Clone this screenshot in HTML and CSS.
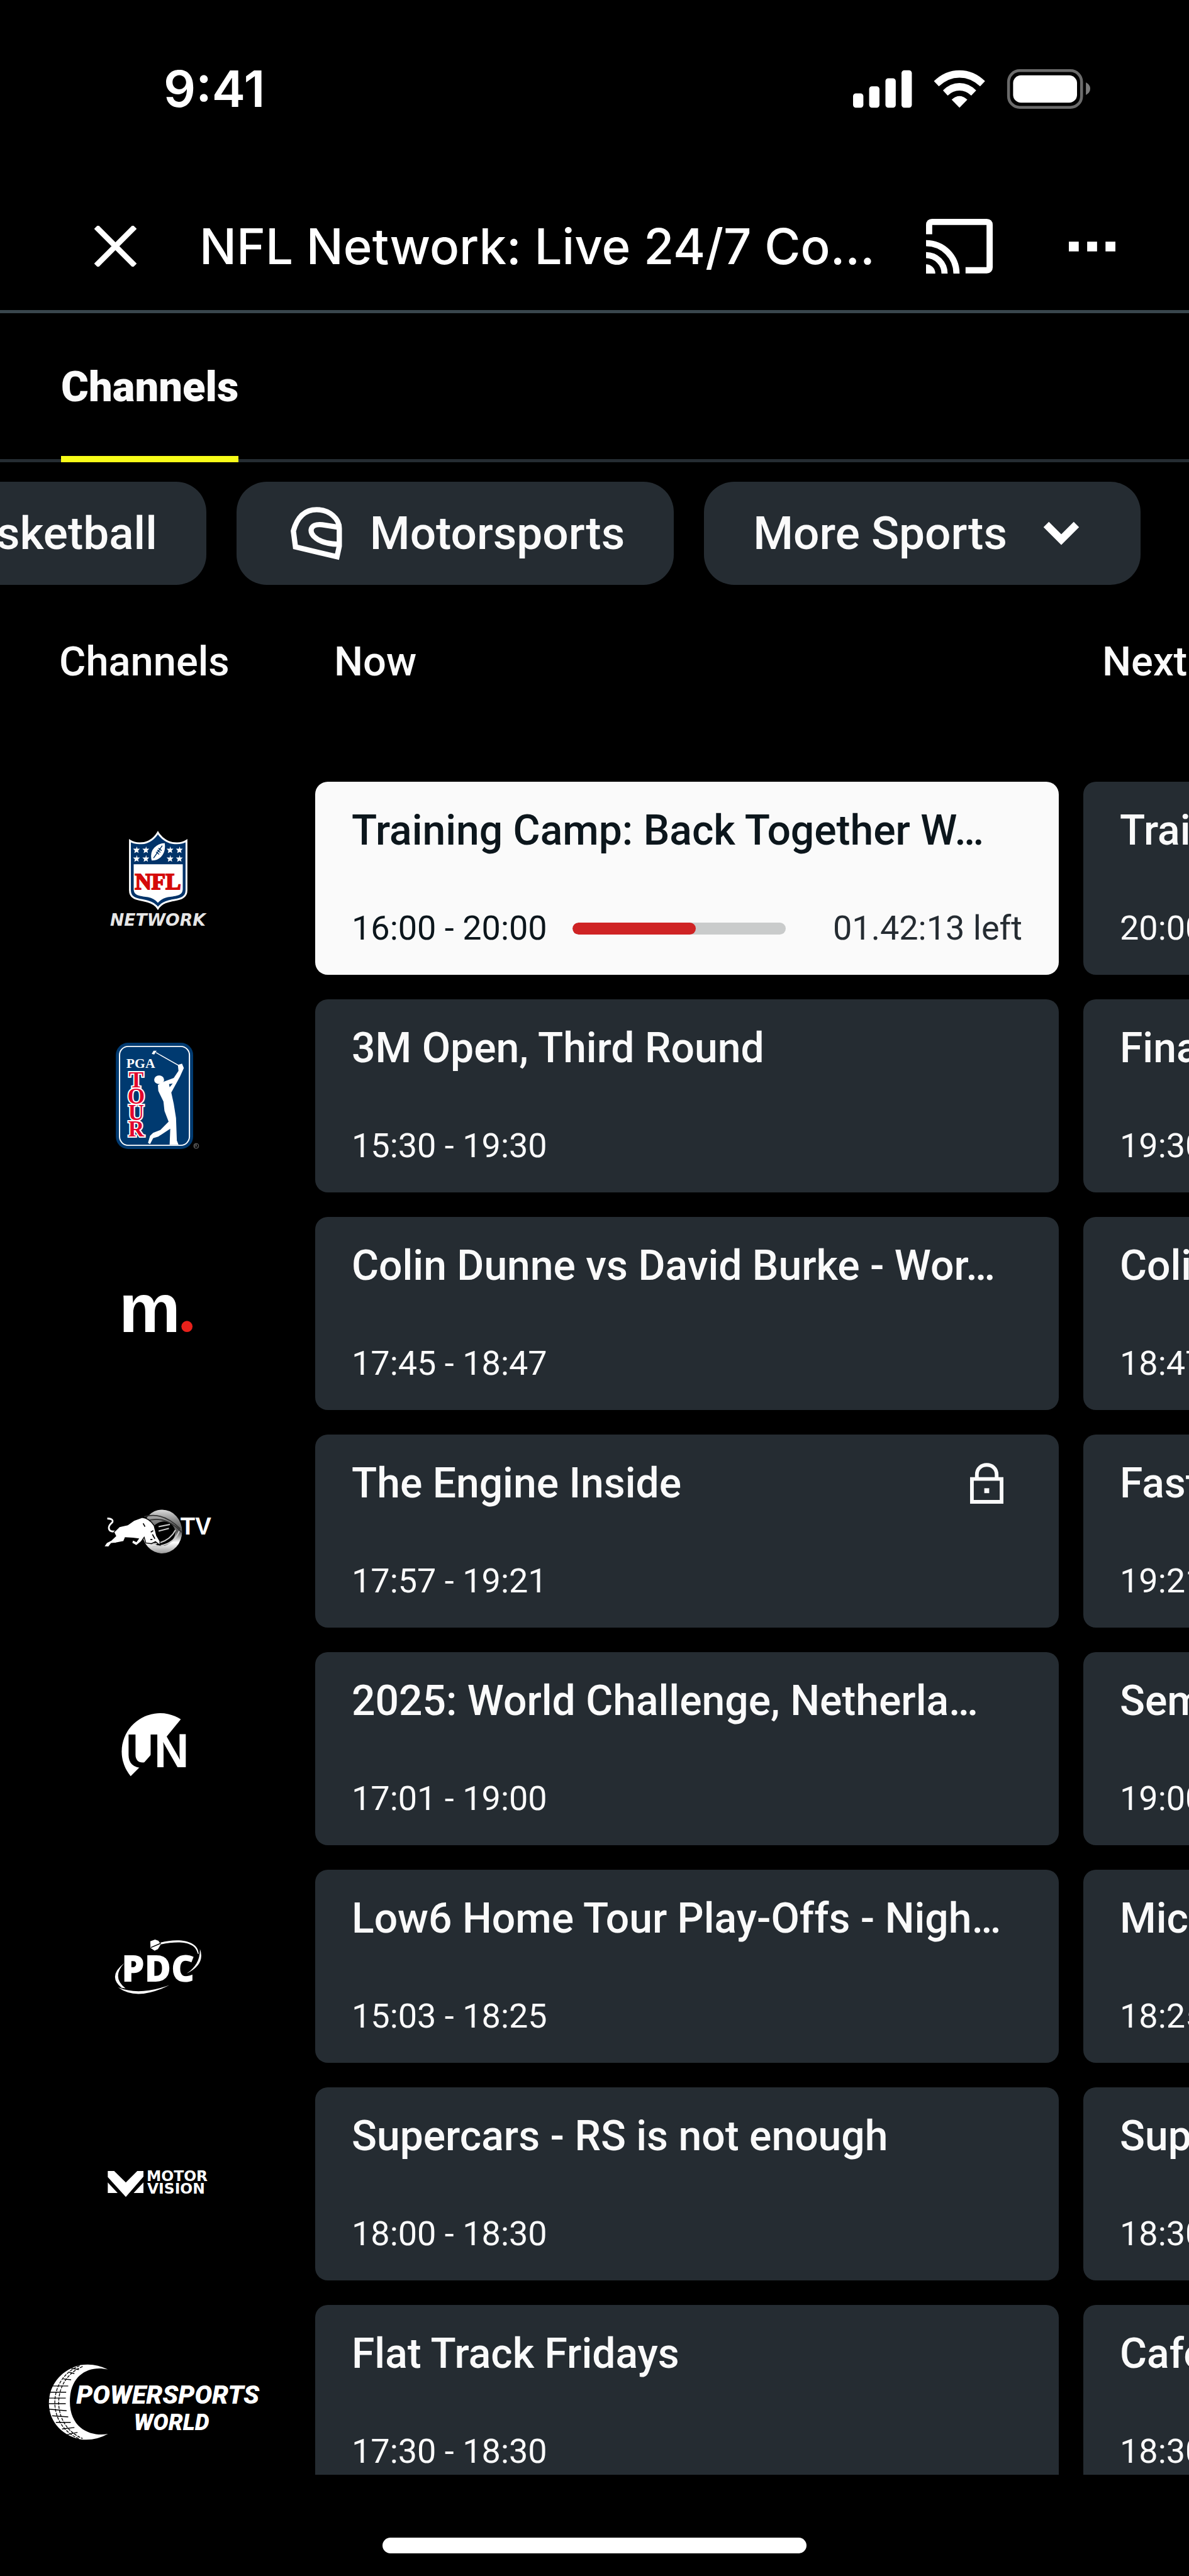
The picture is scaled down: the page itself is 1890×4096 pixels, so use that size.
FILE: index.html
```html
<!DOCTYPE html>
<html lang="en">
<head>
  <meta charset="UTF-8">
  <meta name="viewport" content="width=device-width, initial-scale=1.0">
  <title>NFL Network: Live 24/7</title>
  <link rel="stylesheet" href="styles.css">
</head>
<body>
  <div class="status-bar">
    <span>9:41</span>
    <svg class="status-icons" viewBox="54 63 1150 192" fill="#fff">
      <rect x="54" y="180" width="50" height="70" rx="14"/>
      <rect x="132" y="146" width="50" height="104" rx="14"/>
      <rect x="211" y="107" width="50" height="143" rx="14"/>
      <rect x="289" y="68" width="50" height="182" rx="14"/>
      <path d="M446 121 Q500 68 570 68 Q640 68 694 121 L670 146 Q625 104 570 104 Q515 104 470 146Z"/>
      <path d="M490 166 Q525 130 570 130 Q615 130 651 166 L627 191 Q602 167 570 167 Q538 167 513 191Z"/>
      <path d="M532 211 Q570 175 608 211 L570 250Z"/>
      <rect x="808" y="70" width="354" height="178" rx="54" fill="none" stroke="#6b6b6b" stroke-width="14"/>
      <rect x="830" y="93" width="310" height="132" rx="38"/>
      <path d="M1183 127 Q1204 138 1204 157 Q1204 177 1183 188Z" fill="#7c7c7c"/>
    </svg>
  </div>

  <header class="top-bar">
    <button type="button" class="icon-button" aria-label="Close">
      <svg class="close-icon" viewBox="0 0 68 66" stroke="#fff" stroke-width="9" stroke-linecap="square">
        <path d="M6 5 L62 61 M62 5 L6 61"/>
      </svg>
    </button>
    <h1>NFL Network: Live 24/7 Co…</h1>
    <button type="button" class="icon-button" aria-label="Cast">
      <svg class="cast-icon" viewBox="405 786 324 266" fill="none" stroke="#fff" stroke-width="30">
        <path d="M420 861 V815 Q420 801 434 801 H700 Q714 801 714 815 V1022 Q714 1036 700 1036 H597"/>
        <path d="M405 904 A148 148 0 0 1 553 1052 M405 962 A90 90 0 0 1 495 1052"/>
        <path d="M405 1007 A45 45 0 0 1 450 1052 H405Z" fill="#fff" stroke="none"/>
      </svg>
    </button>
    <button type="button" class="icon-button more-button" aria-label="More options">
      <svg class="more-icon" viewBox="0 0 226 48" fill="#fff">
        <path d="M0 0H48V48H0Z M89 0H137V48H89Z M178 0H226V48H178Z"/>
      </svg>
    </button>
  </header>

  <nav class="tabs">
    <a href="#guide" class="tab">Channels</a>
  </nav>

  <div class="filters">
    <button type="button" class="chip">Basketball</button>
    <button type="button" class="chip">
      <svg class="chip-icon" viewBox="40 45 288 288" fill="none" stroke="#fff" stroke-width="25">
        <path d="M77 178 Q105 76 188 76 C250 76 296 120 296 165 V250 L285 301 L87 254Z"/>
        <path d="M292 160 L215 148 C150 140 150 190 185 212 Q220 240 292 241"/>
      </svg>
      Motorsports
    </button>
    <button type="button" class="chip">
      More Sports
      <svg class="chip-icon" viewBox="0 0 96 96" fill="none" stroke="#fff" stroke-width="12">
        <path d="M24 34 L48 58 L72 34"/>
      </svg>
    </button>
  </div>

  <main class="guide" id="guide">
    <table class="schedule">
      <thead>
        <tr>
          <th class="channel-head" scope="col">Channels</th>
          <th scope="col">Now</th>
          <th scope="col">Next</th>
        </tr>
      </thead>
      <tbody>
        <tr>
          <td class="channel">
            <svg width="158" height="155" viewBox="74 42 160 157" role="img" aria-label="NFL Network">
              <path d="M154 47 C148 57 138 64 128 64 Q117 65 109 60 V140 C109 156 126 154 138 158 Q149 161 154 169 Q159 161 170 158 C182 154 200 156 200 140 V60 Q192 65 181 64 C171 64 160 57 154 47Z" fill="#013369" stroke="#fff" stroke-width="3"/>
              <path d="M115 98 H194 V138 C194 150 180 149 170 151 Q160 153 154 160 Q148 153 138 151 C128 149 115 150 115 138Z" fill="#fff"/>
              <g fill="#fff">
                <path id="star" d="M120 69 L121 73 H125 L122 76 L123 80 L120 78 L116 80 L117 76 L114 73 H119Z"/>
                <use href="#star" x="15"/><use href="#star" x="54"/><use href="#star" x="69"/>
                <use href="#star" y="14"/><use href="#star" x="15" y="14"/><use href="#star" x="54" y="14"/><use href="#star" x="69" y="14"/>
              </g>
              <path d="M144 92 Q140 76 152 68 Q158 64 165 64 Q167 78 159 86 Q153 92 144 92Z" fill="#fff"/>
              <path d="M147 88 L161 68 M151 78 L156 82 M153 75 L158 79 M155 72 L160 76" stroke="#013369" stroke-width="1.5"/>
              <text class="nfl-name" x="154" y="138" text-anchor="middle">NFL</text>
              <text class="network-name" x="154" y="197" text-anchor="middle">NETWORK</text>
            </svg>
          </td>
          <td>
            <a href="#" class="program live">
              <span class="program-title">Training Camp: Back Together W…</span>
              <span class="program-time">
                16:00 - 20:00
                <progress max="100" value="58" aria-label="Elapsed"></progress>
                <span class="time-left">01.42:13 left</span>
              </span>
            </a>
          </td>
          <td>
            <a href="#" class="program">
              <span class="program-title">Training Camp</span>
              <span class="program-time">20:00 - 21:00</span>
            </a>
          </td>
        </tr>
        <tr>
          <td class="channel">
            <svg width="135" height="171" viewBox="87 386 137 174" role="img" aria-label="PGA Tour">
              <rect x="88" y="387" width="125" height="172" rx="20" fill="#003a70"/>
              <rect x="94" y="393" width="113" height="160" rx="14" fill="none" stroke="#fff" stroke-width="2"/>
              <text class="pga-name" x="105" y="428">PGA</text>
              <text class="tour-name" text-anchor="middle"><tspan x="121" y="459">T</tspan><tspan x="121" y="486">O</tspan><tspan x="121" y="512">U</tspan><tspan x="121" y="539">R</tspan></text>
              <path d="M153 403 L190 424" stroke="#fff" stroke-width="1.5"/>
              <path d="M146 405 L149 400 L154 400 L150 406Z" fill="#fff"/>
              <ellipse cx="158" cy="447" rx="8" ry="7" fill="#fff"/>
              <path fill="#fff" transform="scale(.3333 .3827)" d="M468 1190 L500 1175 L545 1160 L568 1130 L565 1105 L585 1100 L594 1118 L575 1155 L550 1195 L533 1222 L545 1270 L556 1330 L560 1425 L568 1442 H525 L528 1375 L470 1408 L445 1415 L430 1440 L420 1435 L430 1405 L445 1392 L480 1380 L520 1345 L500 1300 L495 1260 L470 1215Z"/>
              <path d="M174 454 L180 453 L175 459Z" fill="#003a70"/>
              <circle cx="218" cy="554" r="4" fill="none" stroke="#777"/>
              <path d="M216 556 V552 H219 L218 554 L220 556" fill="none" stroke="#777"/>
            </svg>
          </td>
          <td>
            <a href="#" class="program">
              <span class="program-title">3M Open, Third Round</span>
              <span class="program-time">15:30 - 19:30</span>
            </a>
          </td>
          <td>
            <a href="#" class="program">
              <span class="program-title">Final Round</span>
              <span class="program-time">19:30 - 21:30</span>
            </a>
          </td>
        </tr>
        <tr>
          <td class="channel">
            <svg width="114" height="61" viewBox="98 94 116 62" role="img" aria-label="m.">
              <text class="m-name" x="93" y="155">m</text>
              <circle cx="203" cy="146" r="9" fill="#e8211b"/>
            </svg>
          </td>
          <td>
            <a href="#" class="program">
              <span class="program-title">Colin Dunne vs David Burke - Wor…</span>
              <span class="program-time">17:45 - 18:47</span>
            </a>
          </td>
          <td>
            <a href="#" class="program">
              <span class="program-title">Colin Dunne</span>
              <span class="program-time">18:47 - 19:50</span>
            </a>
          </td>
        </tr>
        <tr>
          <td class="channel">
            <svg width="173" height="74" viewBox="67 438 176 75" role="img" aria-label="Red Bull TV">
              <defs>
                <linearGradient id="ring" x1="0" y1="0" x2="0" y2="1">
                  <stop offset="0" stop-color="#ddd"/>
                  <stop offset=".25" stop-color="#888"/>
                  <stop offset=".5" stop-color="#555"/>
                  <stop offset=".75" stop-color="#fff"/>
                  <stop offset="1" stop-color="#999"/>
                </linearGradient>
              </defs>
              <g transform="scale(.3333 .35714)">
                <ellipse cx="487" cy="1332" rx="97" ry="99" fill="url(#ring)"/>
                <ellipse cx="490" cy="1342" rx="62" ry="54" transform="rotate(-25 490 1342)" fill="#000"/>
                <path d="M400 1265 Q490 1240 575 1320 M410 1285 Q500 1255 582 1335" fill="none" stroke="#333" stroke-width="5"/>
                <path d="M440 1400 Q540 1400 570 1330 M430 1390 Q520 1385 552 1325 M470 1310 L525 1300 M470 1330 L520 1318" fill="none" stroke="#ccc" stroke-width="6"/>
                <path d="M221 1273 Q252 1274 246 1290 Q218 1312 234 1328 Q245 1335 266 1330" fill="none" stroke="#fff" stroke-width="8"/>
                <path fill="#fff" stroke="#000" stroke-width="4" d="M253 1335 L280 1310 L320 1302 L350 1282 L390 1268 Q425 1272 448 1305 L460 1350 L476 1375 L477 1394 L455 1378 L435 1387 L408 1384 L400 1358 L385 1378 L362 1396 L340 1384 L345 1370 L362 1378 L372 1365 L345 1362 L308 1360 L300 1377 L262 1384 L240 1386 L227 1402 L205 1400 L218 1382 L240 1372 L262 1352Z"/>
                <path d="M395 1295 L404 1310 M432 1335 L444 1328 M430 1368 H440 M440 1345 L452 1365" stroke="#000" stroke-width="5"/>
              </g>
              <text class="redbull-name" x="192" y="481">TV</text>
            </svg>
          </td>
          <td>
            <a href="#" class="program">
              <span class="program-title">The Engine Inside
                <svg class="lock-icon" viewBox="0 0 54 67" fill="none" stroke="#fafafa" stroke-width="6" role="img" aria-label="Locked">
                  <path d="M3 26 H51 V63 H3Z M11 26 V19 C11 -2 43 -2 43 19 V26"/>
                  <rect x="23" y="41" width="8" height="8" fill="#fafafa" stroke="none"/>
                </svg>
              </span>
              <span class="program-time">17:57 - 19:21</span>
            </a>
          </td>
          <td>
            <a href="#" class="program">
              <span class="program-title">Fast Life</span>
              <span class="program-time">19:21 - 20:00</span>
            </a>
          </td>
        </tr>
        <tr>
          <td class="channel">
            <svg width="123" height="121" viewBox="92 65 125 123" role="img" aria-label="UN">
              <path d="M192 79 A62 62 0 0 0 111 171 L131 151 L170 106Z" fill="#fff"/>
              <text class="un-name" x="103" y="157" fill="#000">U</text>
              <text class="un-name" x="149" y="157" fill="#fff">N</text>
            </svg>
          </td>
          <td>
            <a href="#" class="program">
              <span class="program-title">2025: World Challenge, Netherla…</span>
              <span class="program-time">17:01 - 19:00</span>
            </a>
          </td>
          <td>
            <a href="#" class="program">
              <span class="program-title">Semi-Final</span>
              <span class="program-time">19:00 - 20:00</span>
            </a>
          </td>
        </tr>
        <tr>
          <td class="channel">
            <svg width="140" height="88" viewBox="83 434 142 90" role="img" aria-label="PDC">
              <text class="pdc-name" x="95" y="504">PDC</text>
              <g transform="scale(.3333 .35714)" fill="#fff">
                <path d="M475 1232 C560 1210 660 1220 661 1285 L656 1282 C645 1228 570 1222 476 1240Z"/>
                <path d="M667 1260 Q695 1330 602 1373 Q670 1330 667 1260Z"/>
                <path d="M297 1326 Q235 1390 304 1440 L285 1438 Q215 1385 297 1326Z"/>
                <path d="M268 1436 Q370 1475 518 1426 Q360 1500 268 1436Z"/>
                <path d="M425 1226 L448 1218 L465 1224 L476 1240 L462 1262 L446 1269 L426 1256Z"/>
                <path d="M428 1254 L474 1236" stroke="#000" stroke-width="4"/>
              </g>
            </svg>
          </td>
          <td>
            <a href="#" class="program">
              <span class="program-title">Low6 Home Tour Play-Offs - Nigh…</span>
              <span class="program-time">15:03 - 18:25</span>
            </a>
          </td>
          <td>
            <a href="#" class="program">
              <span class="program-title">Michael Smith</span>
              <span class="program-time">18:25 - 19:00</span>
            </a>
          </td>
        </tr>
        <tr>
          <td class="channel">
            <svg width="162" height="43" viewBox="132 49 165 44" role="img" aria-label="Motorvision">
              <path fill="#fff" transform="scale(.3333 .35714)" d="M399 140 H430 L487 192 L543 140 H573 V166 L487 258 L399 168Z M399 192 L447 240 H399Z M573 192 V240 H525Z"/>
              <text class="motor-name" x="196" y="66">MOTOR</text>
              <text class="motor-name" x="197" y="87">VISION</text>
            </svg>
          </td>
          <td>
            <a href="#" class="program">
              <span class="program-title">Supercars - RS is not enough</span>
              <span class="program-time">18:00 - 18:30</span>
            </a>
          </td>
          <td>
            <a href="#" class="program">
              <span class="program-title">Supercars</span>
              <span class="program-time">18:30 - 19:00</span>
            </a>
          </td>
        </tr>
        <tr>
          <td class="channel">
            <svg width="347" height="122" viewBox="38 360 353 124" role="img" aria-label="Powersports World">
              <g transform="scale(.3333 .35714)">
                <path fill="#fff" d="M402 1035 Q340 1005 270 1015 C70 1060 60 1310 270 1352 Q340 1360 403 1327 C330 1340 218 1310 218 1180 C218 1060 310 1015 402 1035Z"/>
                <path fill="none" stroke="#000" stroke-width="4" stroke-dasharray="14 5" d="M265 1018 C105 1080 105 1290 265 1350 M280 1022 C125 1080 125 1290 280 1348"/>
                <path fill="none" stroke="#000" stroke-width="4" d="M215 1048 L240 1054 M186 1078 L224 1082 M132 1110 L210 1110 M117 1138 L200 1138 M114 1165 L198 1165 M115 1190 L198 1190 M117 1215 L202 1222 M132 1245 L210 1250 M150 1275 L222 1275 M180 1305 L240 1298 M225 1030 L262 1036 M205 1330 L255 1320"/>
              </g>
              <text class="power-name" x="83" y="425">POWERSPORTS</text>
              <text class="world-name" x="176" y="468">WORLD</text>
            </svg>
          </td>
          <td>
            <a href="#" class="program">
              <span class="program-title">Flat Track Fridays</span>
              <span class="program-time">17:30 - 18:30</span>
            </a>
          </td>
          <td>
            <a href="#" class="program">
              <span class="program-title">Cafe Racer</span>
              <span class="program-time">18:30 - 19:30</span>
            </a>
          </td>
        </tr>
      </tbody>
    </table>
  </main>

  <footer class="home-area">
    <div class="home-indicator"></div>
  </footer>
</body>
</html>
```

FILE: styles.css
```css
* {
  box-sizing: border-box;
}

body {
  margin: 0;
  height: 100vh;
  display: flex;
  flex-direction: column;
  overflow: hidden;
  background: #000;
  color: #fafafa;
  font-family: Roboto, "Liberation Sans", sans-serif;
}

button {
  border: 0;
  padding: 0;
  background: none;
  color: inherit;
  font: inherit;
  cursor: pointer;
}

a {
  color: inherit;
  text-decoration: none;
}

svg {
  display: block;
}

/* phone status bar */
.status-bar {
  display: flex;
  align-items: center;
  justify-content: space-between;
  height: 290px;
  padding: 0 157px 8px 260px;
  font: 600 80px/96px Inter, sans-serif;
  color: #fff;
}

.status-icons {
  width: 377px;
  height: 63px;
}

/* title bar */
.top-bar {
  display: flex;
  align-items: center;
  height: 208px;
  padding: 0 117px 0 150px;
  border-bottom: 5px solid #39464d;
}

.top-bar h1 {
  flex: 1;
  margin: 0 40px 0 100px;
  overflow: hidden;
  white-space: nowrap;
  font: 500 78px/96px Inter, sans-serif;
  color: #fff;
}

.close-icon {
  width: 67px;
  height: 65px;
}

.cast-icon {
  width: 106px;
  height: 87px;
}

.more-button {
  margin-left: 121px;
}

.more-icon {
  width: 74px;
  height: 16px;
}

.tabs {
  display: flex;
  padding: 0 97px;
  border-bottom: 5px solid #252c32;
}

.tab {
  margin-bottom: -5px;
  padding: 77px 0 70px;
  border-bottom: 10px solid #f8fc18;
  font-size: 67px;
  font-weight: 900;
  line-height: 80px;
}

/* sport filters, scrolled to the end */
.filters {
  display: flex;
  justify-content: flex-end;
  gap: 48px;
  margin-top: 31px;
  padding-right: 77px;
  overflow: hidden;
}

.chip {
  display: flex;
  flex-shrink: 0;
  align-items: center;
  gap: 38px;
  height: 164px;
  padding: 0 78px;
  border-radius: 48px;
  background: #252c32;
  font-size: 73px;
  font-weight: 500;
}

.chip-icon {
  width: 96px;
  height: 96px;
}

/* tv guide */
.guide {
  flex: 1;
  min-height: 0;
  overflow: hidden;
}

.schedule {
  border-spacing: 39px;
  text-align: left;
}

.schedule th {
  height: 235px;
  padding: 43px 30px 0;
  vertical-align: top;
  font-size: 65px;
  font-weight: 500;
  line-height: 80px;
}

.schedule .channel-head {
  padding-left: 55px;
}

.schedule td {
  padding: 0;
}

.channel svg {
  margin: 0 auto;
}

.schedule .channel {
  min-width: 423px;
}

.program {
  display: flex;
  flex-direction: column;
  justify-content: space-between;
  width: 1182px;
  height: 307px;
  padding: 38px 58px 42px;
  border-radius: 20px;
  background: #252c32;
}

.program-title {
  display: flex;
  justify-content: space-between;
  align-items: center;
  padding-right: 30px;
  white-space: nowrap;
  font-size: 66px;
  font-weight: 500;
  line-height: 80px;
}

.program-time {
  display: flex;
  align-items: center;
  gap: 40px;
  white-space: nowrap;
  font-size: 54px;
  line-height: 64px;
}

.live {
  background: #fafafa;
  color: #0c161c;
}

.time-left {
  margin-left: auto;
  color: #252c32;
}

.lock-icon {
  width: 53px;
  height: 66px;
}

progress {
  appearance: none;
  width: 339px;
  height: 19px;
  border: 0;
  border-radius: 10px;
  overflow: hidden;
  background: #c9cbcb;
}

progress::-webkit-progress-bar {
  background: #c9cbcb;
}

progress::-webkit-progress-value {
  border-radius: 10px;
  background: #cf2324;
}

/* channel logo lettering */
.nfl-name {
  fill: #d50a0a;
  stroke: #d50a0a;
  stroke-width: 2px;
  font: bold 37px "Liberation Serif", serif;
}

.network-name {
  fill: #e6e6e6;
  font: italic bold 27px "DejaVu Sans", sans-serif;
}

.pga-name {
  fill: #fff;
  font: bold 22px "Liberation Serif", serif;
}

.tour-name {
  fill: #e4002b;
  stroke: #fff;
  stroke-width: 4px;
  paint-order: stroke;
  font: bold 36px "Liberation Serif", serif;
}

.m-name {
  fill: #fff;
  font: bold 112px "Liberation Sans", sans-serif;
}

.redbull-name {
  fill: #fff;
  font: bold 39px "Liberation Sans", sans-serif;
}

.un-name {
  font: bold 78px "Liberation Sans", sans-serif;
}

.pdc-name {
  fill: #fff;
  font: 800 59px "Open Sans", sans-serif;
}

.motor-name {
  fill: #fff;
  font: bold 24px "DejaVu Sans", sans-serif;
}

.power-name {
  fill: #fff;
  font: italic 900 42px Roboto, sans-serif;
}

.world-name {
  fill: #fff;
  font: italic 900 37px Roboto, sans-serif;
}

.home-area {
  display: flex;
  flex-shrink: 0;
  justify-content: center;
  height: 161px;
  padding-top: 100px;
}

.home-indicator {
  width: 674px;
  height: 25px;
  border-radius: 13px;
  background: #fff;
}
```
